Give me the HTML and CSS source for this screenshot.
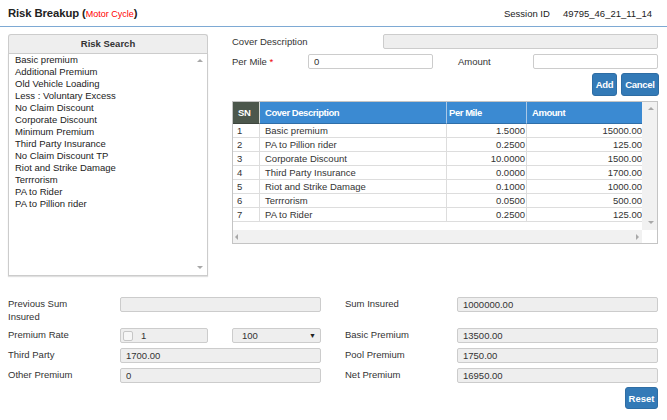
FILE: index.html
```html
<!DOCTYPE html>
<html>
<head>
<meta charset="utf-8">
<title>Risk Breakup</title>
<link rel="stylesheet" href="styles.css">
</head>
<body>
<header class="topbar">
  <h1 class="title">Risk Breakup <span class="paren">(<span class="sub">Motor Cycle</span>)</span></h1>
  <div class="session"><span>Session ID</span><span>49795_46_21_11_14</span></div>
</header>
<main class="page">
  <section class="upper">
    <aside class="risk-panel">
      <div class="risk-head">Risk Search</div>
      <div class="risk-list">
        <ul class="items">
          <li>Basic premium</li>
          <li>Additional Premium</li>
          <li>Old Vehicle Loading</li>
          <li>Less : Voluntary Excess</li>
          <li>No Claim Discount</li>
          <li>Corporate Discount</li>
          <li>Minimum Premium</li>
          <li>Third Party Insurance</li>
          <li>No Claim Discount TP</li>
          <li>Riot and Strike Damage</li>
          <li>Terrrorism</li>
          <li>PA to Rider</li>
          <li>PA to Pillion rider</li>
        </ul>
        <div class="list-scroll"><i class="arr up"></i><i class="arr down"></i></div>
      </div>
    </aside>
    <div class="cover">
      <div class="row r1">
        <label class="lbl-cd">Cover Description</label>
        <input class="field dis w-cd" readonly value="">
      </div>
      <div class="row r2">
        <label class="lbl-pm">Per Mile <span class="req">*</span></label>
        <input class="field w-half" value="0">
        <label class="lbl-amt">Amount</label>
        <input class="field w-half" value="">
      </div>
      <div class="btns">
        <button class="btn btn-add">Add</button>
        <button class="btn btn-cancel">Cancel</button>
      </div>
      <div class="grid">
        <div class="grid-view">
          <table class="tbl">
            <colgroup><col class="c-sn"><col class="c-desc"><col class="c-pm"><col class="c-amt"></colgroup>
            <thead>
              <tr><th class="th-sn">SN</th><th>Cover Description</th><th class="th-pm">Per Mile</th><th>Amount</th></tr>
            </thead>
            <tbody>
              <tr><td class="sn">1</td><td class="desc">Basic premium</td><td class="num">1.5000</td><td class="num">15000.00</td></tr>
              <tr><td class="sn">2</td><td class="desc">PA to Pillion rider</td><td class="num">0.2500</td><td class="num">125.00</td></tr>
              <tr><td class="sn">3</td><td class="desc">Corporate Discount</td><td class="num">10.0000</td><td class="num">1500.00</td></tr>
              <tr><td class="sn">4</td><td class="desc">Third Party Insurance</td><td class="num">0.0000</td><td class="num">1700.00</td></tr>
              <tr><td class="sn">5</td><td class="desc">Riot and Strike Damage</td><td class="num">0.1000</td><td class="num">1000.00</td></tr>
              <tr><td class="sn">6</td><td class="desc">Terrrorism</td><td class="num">0.0500</td><td class="num">500.00</td></tr>
              <tr><td class="sn">7</td><td class="desc">PA to Rider</td><td class="num">0.2500</td><td class="num">125.00</td></tr>
            </tbody>
          </table>
        </div>
        <div class="vbar"><i class="arr up"></i><i class="arr down"></i></div>
        <div class="hbar"><i class="arr left"></i><i class="arr right"></i></div>
        <div class="corner"></div>
      </div>
    </div>
  </section>

  <section class="totals">
    <label class="lbl lbl-l lbl-wrap">Previous Sum Insured</label>
    <input class="field dis" readonly value="">
    <label class="lbl lbl-r">Sum Insured</label>
    <input class="field dis" readonly value="1000000.00">

    <label class="lbl lbl-l">Premium Rate</label>
    <div class="pr">
      <div class="field dis chkfield"><span class="chk"></span><span class="chk-val">1</span></div>
      <div class="field dis selectfield"><span>100</span><span class="caret">▼</span></div>
    </div>
    <label class="lbl lbl-r">Basic Premium</label>
    <input class="field dis" readonly value="13500.00">

    <label class="lbl lbl-l">Third Party</label>
    <input class="field dis" readonly value="1700.00">
    <label class="lbl lbl-r">Pool Premium</label>
    <input class="field dis" readonly value="1750.00">

    <label class="lbl lbl-l">Other Premium</label>
    <input class="field dis" readonly value="0">
    <label class="lbl lbl-r">Net Premium</label>
    <input class="field dis" readonly value="16950.00">
  </section>

  <div class="actions"><button class="btn btn-reset">Reset</button></div>
</main>
</body>
</html>
```

FILE: styles.css
```css
* { box-sizing: border-box; }

html, body {
  margin: 0;
  padding: 0;
}

body {
  width: 667px;
  height: 420px;
  overflow: hidden;
  background: #fff;
  color: #333;
  font-family: "Liberation Sans", Arial, sans-serif;
  font-size: 9.5px;
}

/* ---------- header ---------- */
.topbar {
  height: 27px;
  border-bottom: 1px solid #7eaad4;
  display: flex;
  align-items: center;
  justify-content: space-between;
  padding: 0 15px 0 8px;
}

.title {
  margin: 0;
  font-size: 11.3px;
  font-weight: bold;
  color: #222;
  letter-spacing: -0.1px;
}

.sub {
  color: #f00;
  font-weight: normal;
  font-size: 9px;
  letter-spacing: 0;
}

.session {
  display: flex;
  gap: 13px;
  color: #222;
}

/* ---------- page ---------- */
.page {
  padding: 7px 8px 0 8px;
}

.upper {
  display: flex;
  gap: 24px;
  align-items: flex-start;
}

/* ---------- risk search ---------- */
.risk-panel {
  width: 200px;
  display: flex;
  flex-direction: column;
}

.risk-head {
  height: 19px;
  line-height: 18px;
  text-align: center;
  font-weight: bold;
  color: #333;
  background: #eee;
  border: 1px solid #ccc;
  border-bottom: none;
  border-radius: 3px 3px 0 0;
}

.risk-list {
  height: 223px;
  border: 1px solid #ccc;
  display: flex;
  box-shadow: 0 1px 1px rgba(0, 0, 0, 0.12);
}

.items {
  list-style: none;
  margin: 0;
  padding: 0 0 0 6px;
  flex: 1;
  line-height: 12px;
  color: #222;
}

.list-scroll {
  width: 14px;
  display: flex;
  flex-direction: column;
  justify-content: space-between;
  align-items: center;
  padding: 5px 0 6px 0;
}

.arr {
  display: block;
  width: 0;
  height: 0;
}

.arr.up {
  border-left: 3px solid transparent;
  border-right: 3px solid transparent;
  border-bottom: 3px solid #a8a8a8;
}

.arr.down {
  border-left: 3px solid transparent;
  border-right: 3px solid transparent;
  border-top: 3px solid #a8a8a8;
}

.arr.left {
  border-top: 3px solid transparent;
  border-bottom: 3px solid transparent;
  border-right: 3px solid #a8a8a8;
}

.arr.right {
  border-top: 3px solid transparent;
  border-bottom: 3px solid transparent;
  border-left: 3px solid #a8a8a8;
}

/* ---------- cover form ---------- */
.cover {
  width: 427px;
}

.row {
  display: flex;
  align-items: center;
}

.lbl-cd { width: 151px; }
.w-cd { width: 275px; }

.r2 { margin-top: 5px; }
.lbl-pm { width: 76px; }
.lbl-amt { width: 75px; margin-left: 25px; }
.w-half { width: 125px; }

.req { color: #e00; }

.field {
  height: 15px;
  border: 1px solid #ccc;
  border-radius: 2px;
  background: #fff;
  padding: 0 5px;
  font-family: inherit;
  font-size: 9.5px;
  color: #333;
  outline: none;
  margin: 0;
}

.field.dis {
  background: #eee;
}

.btns {
  display: flex;
  justify-content: flex-end;
  gap: 4px;
  margin-top: 4px;
}

.btn {
  height: 23px;
  padding: 0;
  font-family: inherit;
  font-size: 9.5px;
  font-weight: bold;
  letter-spacing: -0.3px;
  color: #fff;
  background: #337ab7;
  border: 1px solid #2e6da4;
  border-radius: 3px;
}

.btn-add { width: 25px; }
.btn-cancel { width: 38px; }

/* ---------- grid ---------- */
.grid {
  margin-top: 5px;
  width: 426px;
  height: 143px;
  border: 1px solid #c4c4c4;
  display: grid;
  grid-template-columns: 1fr 15px;
  grid-template-rows: 1fr 13px;
}

.grid-view {
  overflow: hidden;
}

.tbl {
  border-collapse: separate;
  border-spacing: 0;
  table-layout: fixed;
  width: 411px;
}

.c-sn { width: 27px; }
.c-desc { width: 187px; }
.c-pm { width: 80px; }
.c-amt { width: 117px; }

.tbl th {
  height: 22px;
  padding: 0 0 0 5px;
  text-align: left;
  font-weight: bold;
  letter-spacing: -0.45px;
  color: #fff;
  background: #3b8ad2;
  border-right: 1px solid #a9c8e6;
  border-bottom: 1px solid #2f6ea8;
}

.tbl th.th-sn {
  background: #4c574c;
  border-right: 1px solid #d8dcd8;
  border-bottom-color: #3d453d;
}

.tbl th.th-pm { padding-left: 2px; }

.tbl td {
  height: 14px;
  padding: 0;
  line-height: 13px;
  color: #333;
  border-right: 1px solid #ddd;
  border-bottom: 1px solid #ddd;
  white-space: nowrap;
  overflow: hidden;
}

.tbl td.sn { padding-left: 4px; }
.tbl td.desc { padding-left: 5px; }
.tbl td.num { text-align: right; padding-right: 1px; }

.vbar {
  background: #f1f1f1;
  display: flex;
  flex-direction: column;
  justify-content: space-between;
  align-items: center;
  padding: 5px 0 6px 2px;
}

.hbar {
  background: #f1f1f1;
  display: flex;
  justify-content: space-between;
  align-items: center;
  padding: 0 3px 0 2px;
}

.corner { background: #fff; }

/* ---------- totals ---------- */
.totals {
  margin-top: 21px;
  display: grid;
  grid-template-columns: 112px 201px 136px 201px;
  row-gap: 5px;
  align-items: start;
}

.lbl {
  line-height: 13px;
  color: #333;
}

.lbl-wrap { padding-right: 20px; }
.lbl-r { padding-left: 24px; }

.pr {
  display: flex;
  gap: 24px;
}

.chkfield {
  width: 88px;
  display: flex;
  align-items: center;
  padding-left: 2px;
}

.chk {
  width: 10px;
  height: 10px;
  border: 1px solid #c6c6c6;
  border-radius: 2px;
  background: #f6f6f6;
}

.chk-val { margin-left: 8px; }

.selectfield {
  width: 89px;
  display: flex;
  align-items: center;
  justify-content: space-between;
  padding: 0 4px 0 9px;
}

.caret {
  font-size: 7px;
  color: #222;
}

.actions {
  display: flex;
  justify-content: flex-end;
  margin-top: 4px;
  padding-right: 1px;
}

.btn-reset {
  width: 33px;
  height: 22px;
  letter-spacing: 0;
}
```
